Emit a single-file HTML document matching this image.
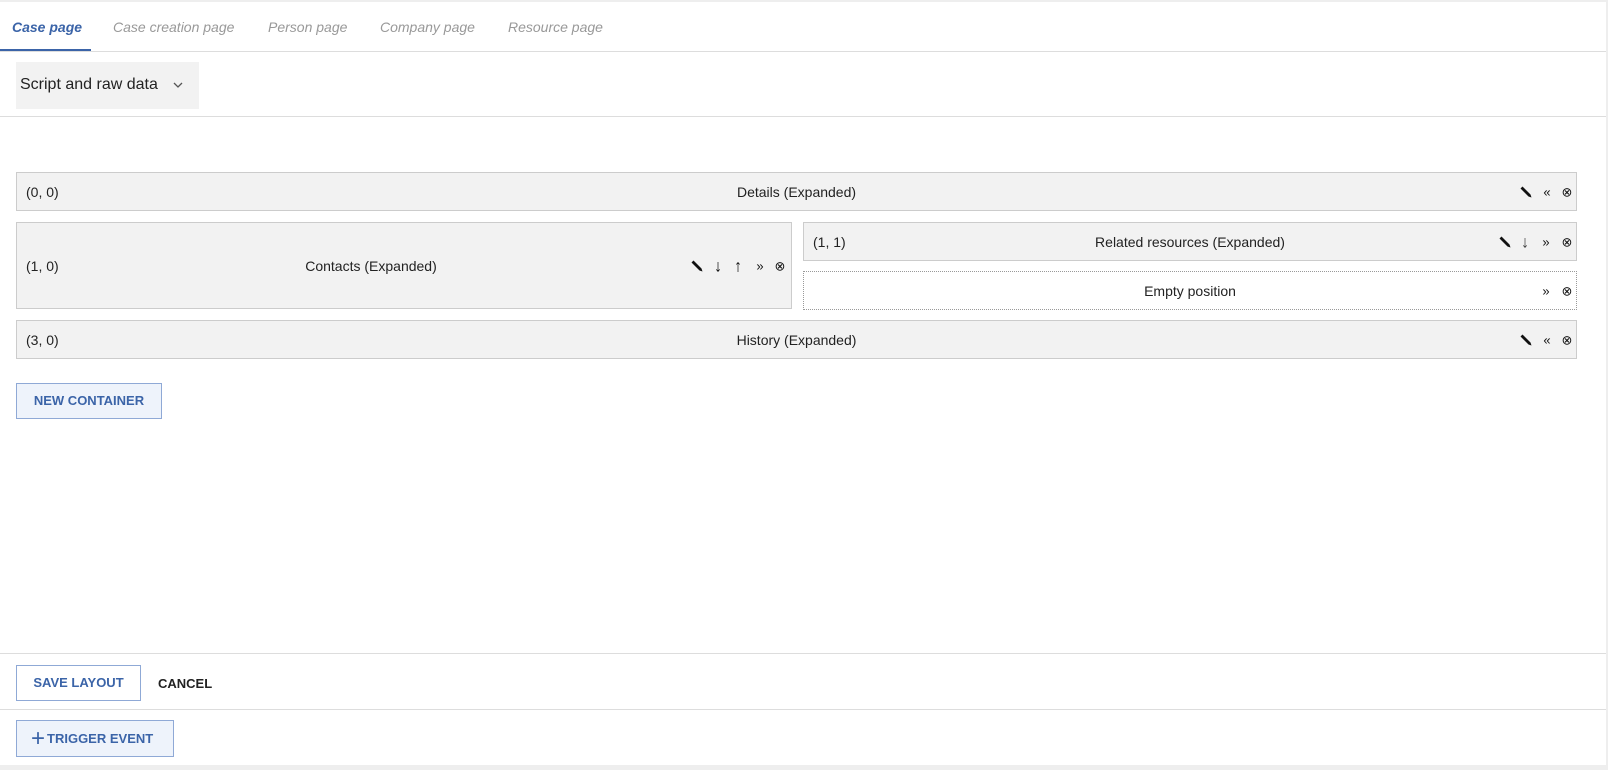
<!DOCTYPE html>
<html><head><style>
*{box-sizing:border-box;margin:0;padding:0}
body{width:1608px;height:770px;background:#eee;font-family:"Liberation Sans",sans-serif;position:relative;overflow:hidden;font-size:14px;color:#222}
.panel{position:absolute;left:0;top:2px;width:1606px;height:763px;background:#fff}
.tab{position:absolute;top:17px;font-style:italic;color:#999;font-size:14px}
.hr{position:absolute;left:0;width:1606px;height:1px;background:#ddd}
.box{position:absolute;background:#f2f2f2;border:1px solid #ccc}
.box .c{position:absolute;left:9px;top:50%;transform:translateY(-50%)}
.box .t{position:absolute;left:0;right:0;text-align:center;top:50%;transform:translateY(-50%)}
.ic{position:absolute;top:50%;transform:translate(-50%,-50%);font-size:13px;color:#111;line-height:1}
.btn{position:absolute;border:1px solid #8fa9d6;color:#3b64a8;font-weight:bold;font-size:13px;text-align:center}
</style></head><body>
<svg width="0" height="0" style="position:absolute"><defs><symbol id="p" viewBox="0 0 12 12"><path d="M0.5 2.5L2.5 0.5L10.5 8.5L11.5 11.5L8.5 10.5Z" fill="#111"/></symbol></defs></svg>
<div class="panel">
<div class="tab" style="left:12px;color:#3b64a8;font-weight:bold">Case page</div>
<div class="tab" style="left:113px">Case creation page</div>
<div class="tab" style="left:268px">Person page</div>
<div class="tab" style="left:380px">Company page</div>
<div class="tab" style="left:508px">Resource page</div>
<div style="position:absolute;left:0;top:47px;width:91px;height:2px;background:#3b64a8"></div>
<div class="hr" style="top:49px"></div>
<div style="position:absolute;left:16px;top:60px;width:183px;height:47px;background:#f2f2f2;font-size:16px;padding:14px 0 0 4px">Script and raw data <svg width="12" height="8" style="margin-left:10px" viewBox="0 0 12 8"><path d="M2 2l4 4 4-4" stroke="#555" stroke-width="1.3" fill="none"/></svg></div>
<div class="hr" style="top:114px"></div>

<div class="box" style="left:16px;top:170px;width:1561px;height:39px"><span class="c">(0, 0)</span><span class="t">Details (Expanded)</span>
<svg class="ic" style="left:1509px" width="12" height="12"><use href="#p"/></svg><span class="ic" style="left:1530px">«</span><span class="ic" style="left:1550px">⊗</span></div>

<div class="box" style="left:16px;top:220px;width:776px;height:87px"><span class="c">(1, 0)</span><span class="t" style="left:-66px">Contacts (Expanded)</span>
<svg class="ic" style="left:680px" width="12" height="12"><use href="#p"/></svg><span class="ic" style="left:701px;font-size:17px">↓</span><span class="ic" style="left:721px;font-size:17px">↑</span><span class="ic" style="left:743px">»</span><span class="ic" style="left:763px">⊗</span></div>

<div class="box" style="left:803px;top:220px;width:774px;height:39px"><span class="c">(1, 1)</span><span class="t">Related resources (Expanded)</span>
<svg class="ic" style="left:701px" width="12" height="12"><use href="#p"/></svg><span class="ic" style="left:721px;font-size:17px;color:#444">↓</span><span class="ic" style="left:742px">»</span><span class="ic" style="left:763px">⊗</span></div>

<div class="box" style="left:803px;top:269px;width:774px;height:39px;background:#fff;border:1px dotted #999"><span class="t">Empty position</span>
<span class="ic" style="left:742px">»</span><span class="ic" style="left:763px">⊗</span></div>

<div class="box" style="left:16px;top:318px;width:1561px;height:39px"><span class="c">(3, 0)</span><span class="t">History (Expanded)</span>
<svg class="ic" style="left:1509px" width="12" height="12"><use href="#p"/></svg><span class="ic" style="left:1530px">«</span><span class="ic" style="left:1550px">⊗</span></div>

<div class="btn" style="left:16px;top:381px;width:146px;height:36px;line-height:34px;background:#eef3fb">NEW CONTAINER</div>

<div class="hr" style="top:651px"></div>
<div class="btn" style="left:16px;top:663px;width:125px;height:36px;line-height:34px">SAVE LAYOUT</div>
<div style="position:absolute;left:158px;top:674px;font-weight:bold;font-size:13px;color:#222">CANCEL</div>
<div class="hr" style="top:707px"></div>
<div class="btn" style="left:16px;top:718px;width:158px;height:37px;line-height:35px;background:#eef3fb;text-align:left;padding-left:14px"><span style="font-size:24px;font-weight:normal;vertical-align:-3px;margin-right:2px">+</span>TRIGGER EVENT</div>
</div>
</body></html>
